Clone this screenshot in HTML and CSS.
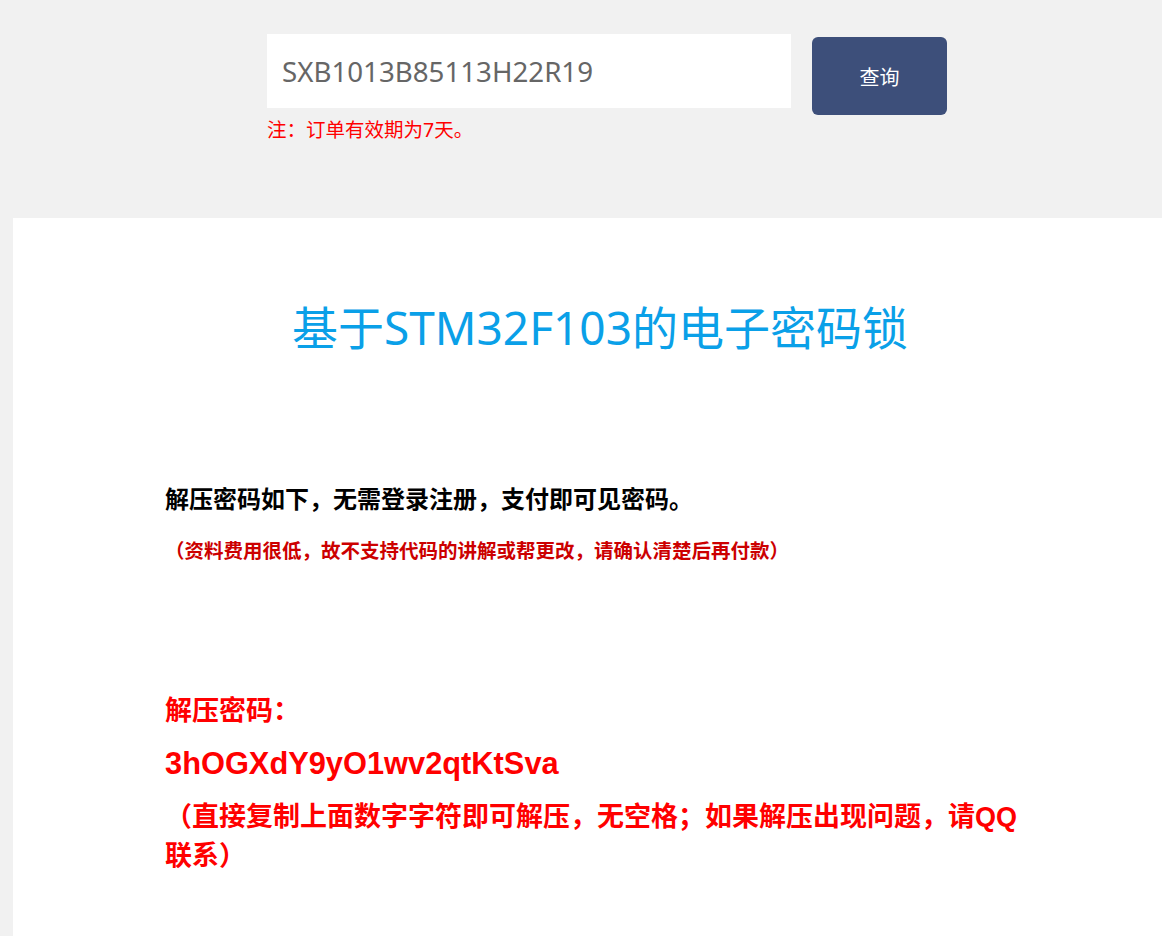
FILE: index.html
```html
<!DOCTYPE html>
<html lang="zh-CN">
<head>
<meta charset="utf-8">
<title>基于STM32F103的电子密码锁</title>
<link rel="stylesheet" href="styles.css">
</head>
<body>
<header class="top">
  <div class="search">
    <div class="search-col">
      <div class="search-input">SXB1013B85113H22R19</div>
      <p class="note">注：订单有效期为7天。</p>
    </div>
    <button class="search-btn" type="button">查询</button>
  </div>
</header>
<main class="panel">
  <h1 class="title">基于STM32F103的电子密码锁</h1>
  <p class="lead">解压密码如下，无需登录注册，支付即可见密码。</p>
  <p class="warn">（资料费用很低，故不支持代码的讲解或帮更改，请确认清楚后再付款）</p>
  <p class="pw-label">解压密码：</p>
  <p class="pw-code">3hOGXdY9yO1wv2qtKtSva</p>
  <p class="pw-tip">（直接复制上面数字字符即可解压，无空格；如果解压出现问题，请QQ联系）</p>
</main>
</body>
</html>
```

FILE: styles.css
```css
html, body {
  margin: 0;
  padding: 0;
}
body {
  background: #f1f1f1;
  font-family: "Noto Sans", "Noto Sans CJK SC", sans-serif;
  overflow: hidden;
}
.top {
  height: 218px;
  box-sizing: border-box;
  padding: 34px 0 0 267px;
}
.search {
  display: flex;
  align-items: flex-start;
}
.search-col {
  display: flex;
  flex-direction: column;
}
.search-input {
  width: 524px;
  height: 74px;
  box-sizing: border-box;
  background: #fff;
  padding-left: 15px;
  font-family: "Noto Sans", "Noto Sans CJK SC", sans-serif;
  font-size: 27.7px;
  line-height: 74px;
  color: #666;
}
.note {
  margin: 10px 0 0;
  font-family: "Noto Sans", "Noto Sans CJK SC", sans-serif;
  font-size: 19.5px;
  line-height: 24px;
  color: #f00;
}
.search-btn {
  margin: 3px 0 0 21px;
  width: 135px;
  height: 78px;
  border: none;
  border-radius: 6px;
  background: #3d4f7a;
  color: #fff;
  font-family: "Noto Sans CJK SC", sans-serif;
  font-size: 20px;
  padding: 0;
}
.panel {
  display: block;
  margin-left: 13px;
  background: #fff;
  padding: 81px 127px 200px 152px;
}
.panel p {
  margin: 0;
}
.title {
  margin: 0;
  text-align: center;
  font-family: "Noto Sans", "Noto Sans CJK SC", sans-serif;
  font-weight: normal;
  font-size: 46px;
  line-height: 56px;
  color: #0aa0e8;
}
.lead {
  margin-top: 129px !important;
  font-family: "Liberation Sans", "Noto Sans CJK SC", sans-serif;
  font-weight: bold;
  font-size: 24px;
  line-height: 32px;
  color: #000;
}
.warn {
  margin-top: 22px !important;
  font-family: "Liberation Sans", "Noto Sans CJK SC", sans-serif;
  font-weight: bold;
  font-size: 19.5px;
  line-height: 26px;
  color: #c00;
}
.pw-label,
.pw-code,
.pw-tip {
  font-family: "Liberation Sans", "Noto Sans CJK SC", sans-serif;
  font-weight: bold;
  font-size: 27px;
  line-height: 39px;
  color: #f00;
}
.pw-label {
  margin-top: 128px !important;
}
.pw-code {
  margin-top: 13px !important;
  font-size: 30.8px;
}
.pw-tip {
  margin-top: 15px !important;
}
```
